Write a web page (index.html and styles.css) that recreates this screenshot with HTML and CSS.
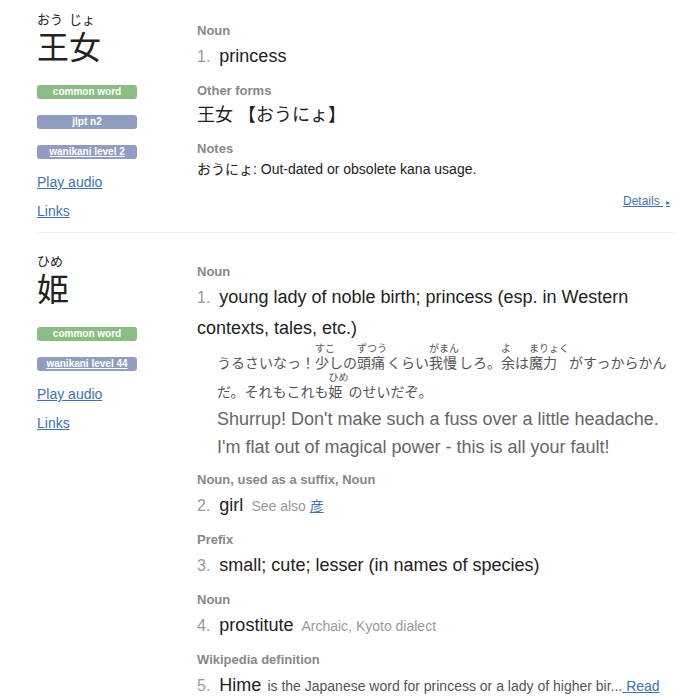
FILE: index.html
```html
<!DOCTYPE html>
<html lang="ja">
<head>
    <meta charset="UTF-8">
    <meta name="viewport" content="width=device-width, initial-scale=1.0">
    <title>王女 / 姫</title>
    <link rel="stylesheet" href="styles.css">
</head>
<body>
    <div id="results">

        <!-- 王女 -->
        <div class="concept">
            <div class="concept-word">
                <div class="representation">
                    <div class="furigana"><span>おう</span><span>じょ</span></div>
                    <div class="word-text">王女</div>
                </div>
                <div class="tags">
                    <span class="tag common">common word</span>
                    <span class="tag">jlpt n2</span>
                    <a class="tag" href="#">wanikani level 2</a>
                </div>
                <a class="word-link" href="#">Play audio</a>
                <a class="word-link" href="#">Links</a>
            </div>

            <div class="meanings">
                <div class="meaning-tags">Noun</div>
                <div class="meaning">
                    <span class="divider">1.</span> <span class="meaning-text">princess</span>
                </div>

                <div class="meaning-tags">Other forms</div>
                <div class="meaning other-forms">王女 【おうにょ】</div>

                <div class="meaning-tags">Notes</div>
                <div class="notes">おうにょ: Out-dated or obsolete kana usage.</div>

                <div class="concept-details">
                    <a href="#">Details <span class="arrow">▸</span></a>
                </div>
            </div>
        </div>

        <!-- 姫 -->
        <div class="concept">
            <div class="concept-word">
                <div class="representation">
                    <div class="furigana"><span>ひめ</span></div>
                    <div class="word-text">姫</div>
                </div>
                <div class="tags">
                    <span class="tag common">common word</span>
                    <a class="tag" href="#">wanikani level 44</a>
                </div>
                <a class="word-link" href="#">Play audio</a>
                <a class="word-link" href="#">Links</a>
            </div>

            <div class="meanings">
                <div class="meaning-tags">Noun</div>
                <div class="meaning with-sentence">
                    <span class="divider">1.</span> <span class="meaning-text">young lady of noble birth; princess (esp. in Western contexts, tales, etc.)</span>
                </div>
                <div class="sentence">
                    <div class="sentence-jp">うるさいなっ！<span class="rb overhang"><span class="rt">すこ</span>少</span>しの<span class="rb"><span class="rt">ずつう</span>頭痛</span>くらい<span class="rb"><span class="rt">がまん</span>我慢</span>しろ。<span class="rb"><span class="rt">よ</span>余</span>は<span class="rb"><span class="rt">まりょく</span>魔力</span>がすっからかんだ。それもこれも<span class="rb"><span class="rt">ひめ</span>姫</span>のせいだぞ。</div>
                    <div class="sentence-en">Shurrup! Don't make such a fuss over a little headache. I'm flat out of magical power - this is all your fault!</div>
                </div>

                <div class="meaning-tags">Noun, used as a suffix, Noun</div>
                <div class="meaning">
                    <span class="divider">2.</span> <span class="meaning-text">girl</span>
                    <span class="supplemental">See also <a href="#">彦</a></span>
                </div>

                <div class="meaning-tags">Prefix</div>
                <div class="meaning">
                    <span class="divider">3.</span> <span class="meaning-text">small; cute; lesser (in names of species)</span>
                </div>

                <div class="meaning-tags">Noun</div>
                <div class="meaning">
                    <span class="divider">4.</span> <span class="meaning-text">prostitute</span>
                    <span class="supplemental">Archaic, Kyoto dialect</span>
                </div>

                <div class="meaning-tags">Wikipedia definition</div>
                <div class="meaning">
                    <span class="divider">5.</span> <span class="meaning-text">Hime</span>
                    <span class="abstract">is the Japanese word for princess or a lady of higher bir...<a href="#"> Read</a></span>
                </div>
            </div>
        </div>

    </div>
</body>
</html>
```

FILE: styles.css
```css
html, body {
    margin: 0;
    padding: 0;
    overflow: hidden;
}

body {
    font-family: "Liberation Sans", Arial, "Noto Sans CJK JP", sans-serif;
    background-color: #fff;
    color: #222;
}

a {
    color: #4371ad;
}

#results {
    padding: 0 13px 0 37px;
}

.concept {
    display: flex;
    padding-top: 20px;
    padding-bottom: 9px;
    border-bottom: 1px solid #eee;
}

.concept:first-child {
    padding-top: 11px;
}

/* left column: word, tags, links */
.concept-word {
    width: 160px;
    flex-shrink: 0;
}

.furigana {
    display: flex;
    font-size: 13px;
    line-height: 18px;
    color: #222;
}

.furigana span {
    width: 32px;
    white-space: nowrap;
}

.word-text {
    font-size: 32px;
    line-height: 38px;
    color: #222;
}

.tags {
    display: flex;
    flex-direction: column;
    gap: 16px;
    margin-top: 18px;
}

.tag {
    display: block;
    width: 100px;
    height: 14px;
    line-height: 14px;
    border-radius: 3px;
    background-color: #909dc0;
    color: #fff;
    font-size: 10px;
    font-weight: bold;
    text-align: center;
}

.tag.common {
    background-color: #8abc83;
}

a.tag {
    color: #fff;
}

.word-link {
    display: block;
    font-size: 14px;
    line-height: 18px;
    margin-top: 11px;
}

.tags + .word-link {
    margin-top: 14px;
}

/* right column: meanings */
.meanings {
    flex: 1;
    padding-top: 11px;
}

.concept:first-child .meanings {
    padding-top: 12px;
}

.meaning-tags {
    font-size: 13px;
    line-height: 16px;
    font-weight: bold;
    color: #888;
    margin-bottom: 2px;
}

.meaning {
    font-size: 18px;
    line-height: 30px;
    margin-bottom: 11px;
}

.meaning.with-sentence {
    margin-bottom: 0;
}

.divider {
    font-size: 16px;
    color: #999;
    margin-right: 4px;
}

.meaning-text {
    color: #222;
}

.other-forms {
    line-height: 29px;
}

.supplemental {
    font-size: 14px;
    color: #999;
    margin-left: 3px;
}

.abstract {
    font-size: 14px;
    color: #555;
    margin-left: 1px;
}

.notes {
    font-size: 14px;
    line-height: 20px;
    color: #222;
}

.concept-details {
    margin-top: 14px;
    margin-bottom: 12px;
    padding-right: 5px;
    text-align: right;
    font-size: 12px;
    line-height: 16px;
}

.arrow {
    font-size: 8px;
    margin-left: 3px;
}

/* example sentence with readings */
.sentence {
    padding-left: 20px;
    margin-bottom: 11px;
    color: #555;
}

.sentence-jp {
    font-size: 14px;
    line-height: 17px;
}

.rb {
    display: inline-block;
    line-height: 17px;
}

/* short reading may hang over the next kana */
.rb.overhang {
    margin-right: -6px;
}

.rt {
    display: block;
    font-size: 10px;
    line-height: 12px;
    white-space: nowrap;
}

.sentence-en {
    margin-top: 4px;
    font-size: 18px;
    line-height: 28px;
    color: #666;
}
```
